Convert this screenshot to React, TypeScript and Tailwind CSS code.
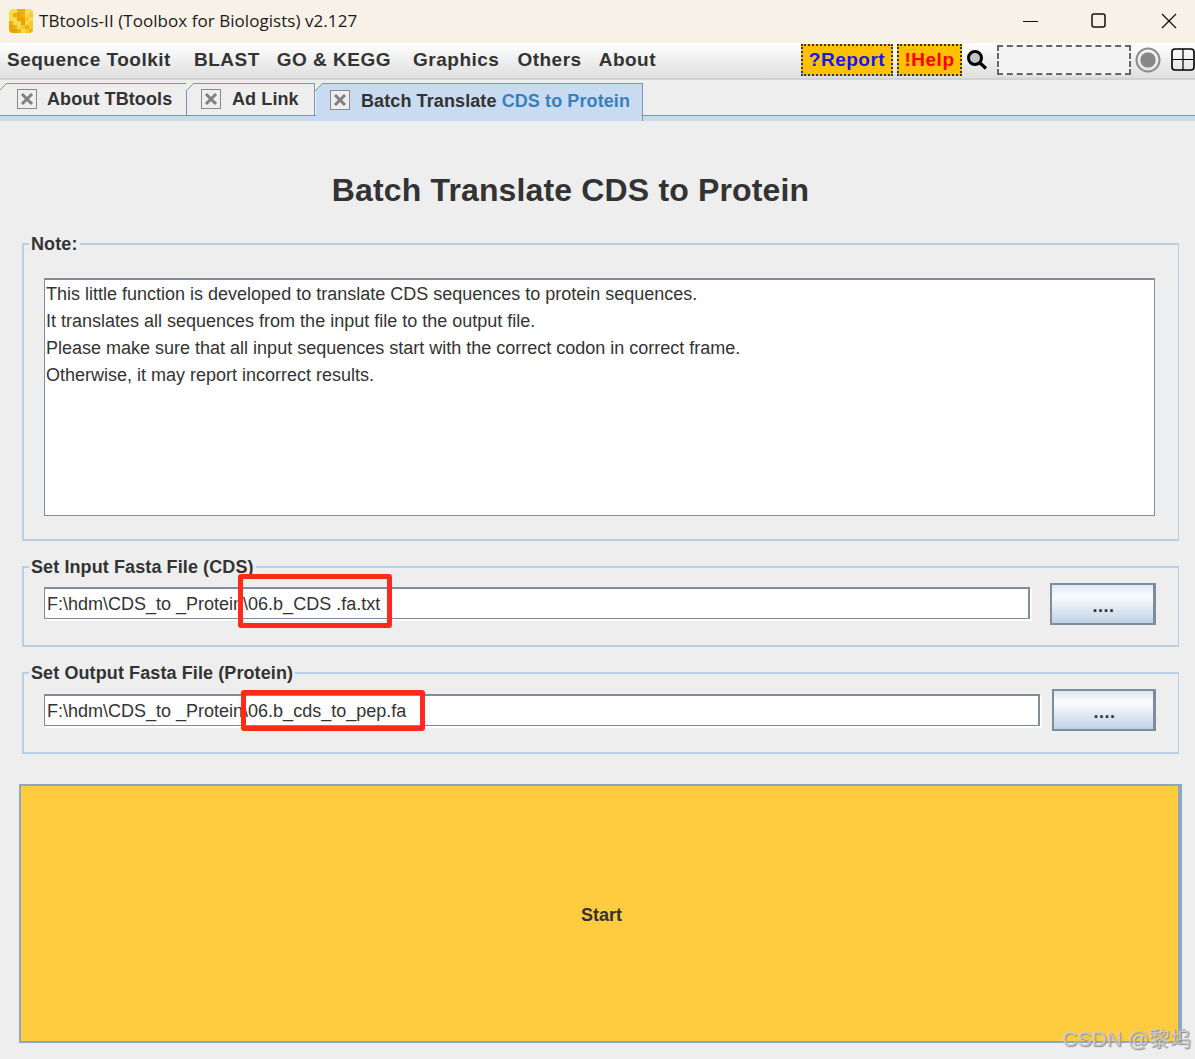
const LOGO = [
  '#f9d94f', '#f9d94f', '#eeb00e', '#eeb00e', '#f9d94f', '#f9d94f',
  '#f9d94f', '#eeb00e', '#e8a400', '#eeb00e', '#f9d94f', '#f5c92e',
  '#f9d94f', '#f9d94f', '#e8a400', '#e8a400', '#f5c92e', '#f9d94f',
  '#eeb00e', '#f9d94f', '#f9d94f', '#e8a400', '#f9d94f', '#f5c92e',
  '#e8a400', '#eeb00e', '#f9d94f', '#f5c92e', '#eeb00e', '#f5c92e',
  '#e8a400', '#e8a400', '#eeb00e', '#f9d94f', '#f5c92e', '#eeb00e',
];

const Logo = () => (
  <svg width="24" height="24" viewBox="0 0 24 24" className="ml-[9px] mr-[6px] shrink-0">
    <clipPath id="logo-clip">
      <rect width="24" height="24" rx="4" />
    </clipPath>
    <g clipPath="url(#logo-clip)">
      {LOGO.map((c, i) => (
        <rect key={i} x={(i % 6) * 4} y={Math.floor(i / 6) * 4} width="4" height="4" fill={c} />
      ))}
    </g>
  </svg>
);

const CloseBox = () => (
  <svg width="20" height="20" viewBox="0 0 20 20" className="shrink-0">
    <rect x="0.5" y="0.5" width="19" height="19" fill="#eeeeee" stroke="#8a8a8a" />
    <path d="M5 5 L15 15 M15 5 L5 15" stroke="#808080" strokeWidth="3" />
  </svg>
);

const TabCorner = ({ color }: { color: string }) => (
  <svg width="8" height="8" viewBox="0 0 8 8" className="absolute left-[-1px] top-[-1px]">
    <path d="M0 0 H8 L0 8 Z" fill="#eeeeee" />
    <path d="M0 8 L8 0" stroke={color} strokeWidth="1" />
  </svg>
);

const menus = [
  { label: 'BLAST', margin: 'ml-[23px]' },
  { label: 'GO & KEGG', margin: 'ml-[17px]' },
  { label: 'Graphics', margin: 'ml-[22px]' },
  { label: 'Others', margin: 'ml-[18px]' },
  { label: 'About', margin: 'ml-[17px]' },
];

const PathField = ({ width, text }: { width: string; text: string }) => (
  <div className={`${width} h-[32px] pt-[2px] bg-white border-t-2 border-l border-b border-r-2 border-[#7f8c9c] flex items-center pl-[2px] text-[18px] text-[#333333] whitespace-nowrap shadow-[2px_2px_0_#ffffff]`}>
    {text}
  </div>
);

const DotsButton = ({ width, height }: { width: string; height: string }) => (
  <button className={`${width} ${height} border-2 border-r-[3px] border-[#7f8c9c] bg-gradient-to-b from-[#dfe8f2] via-[#fbfcfe] via-30% to-[#bfd2e6] flex items-end justify-center pl-[2px] pb-[9px] text-[18px] font-bold leading-[16px] tracking-[0.5px] text-[#333333]`}>
    ....
  </button>
);

const App = () => {
  return (
    <div className="relative w-[1195px] h-[1059px] overflow-hidden bg-[#eeeeee] font-['Liberation_Sans',Arial,sans-serif]">
      {/* Window title */}
      <div className="h-[43px] pb-[2px] bg-[#f8f1e8] flex items-center">
        <Logo />
        <span className="font-['Open_Sans',sans-serif] text-[17px] tracking-[0.05px] text-[#1a1a1a]">TBtools-II (Toolbox for Biologists) v2.127</span>
        <div className="ml-auto flex items-center">
          <svg width="16" height="16" viewBox="0 0 16 16" className="mr-[52px]">
            <path d="M0 8.5 H15" stroke="#111111" strokeWidth="1" />
          </svg>
          <svg width="16" height="16" viewBox="0 0 16 16" className="mr-[54px]">
            <rect x="1" y="1" width="13" height="13" rx="2" fill="none" stroke="#111111" strokeWidth="1.5" />
          </svg>
          <svg width="16" height="16" viewBox="0 0 16 16" className="mr-[18px]">
            <path d="M1 1 L15 15 M15 1 L1 15" stroke="#111111" strokeWidth="1.3" />
          </svg>
        </div>
      </div>

      {/* Menu bar */}
      <div className="h-[35px] pb-[2px] bg-gradient-to-b from-white to-[#dfdfdf] flex items-center text-[19px] font-bold text-[#333333] tracking-[0.5px]">
        <span className="ml-[7px] mt-[2px]">Sequence Toolkit</span>
        {menus.map(m => (
          <span key={m.label} className={`${m.margin} mt-[2px]`}>{m.label}</span>
        ))}
        <div className="ml-auto flex items-center h-[33px]">
          <button className="w-[92px] h-[32px] pt-[2px] bg-[#ffc000] border-2 border-dotted border-[#333366] font-bold text-[#1414ff] flex items-center justify-center">?Report</button>
          <button className="ml-[4px] w-[65px] h-[32px] pt-[2px] bg-[#ffc000] border-2 border-dotted border-[#333333] font-bold text-[#ff0000] flex items-center justify-center">!Help</button>
          <svg width="22" height="22" viewBox="0 0 22 22" className="ml-[4px]">
            <circle cx="9" cy="9" r="6.5" fill="#c4c4c4" stroke="#000000" strokeWidth="3" />
            <path d="M13.5 13.5 L20 19.5" stroke="#000000" strokeWidth="3.2" />
          </svg>
          <div className="ml-[9px] w-[134px] h-[30px] bg-[#f4f4f4] border-2 border-dashed border-[#666666]"></div>
          <svg width="26" height="26" viewBox="0 0 26 26" className="ml-[4px]">
            <circle cx="13" cy="13" r="11.5" fill="none" stroke="#8c8c8c" strokeWidth="2" />
            <circle cx="13" cy="13" r="8" fill="#868686" stroke="#dddddd" strokeWidth="1" />
          </svg>
          <svg width="24" height="24" viewBox="0 0 24 24" className="ml-[10px]">
            <rect x="1" y="1" width="22" height="21" rx="3" fill="none" stroke="#000000" strokeWidth="1.6" />
            <path d="M12 1 V22 M1 11.5 H23" stroke="#000000" strokeWidth="1.2" />
          </svg>
        </div>
      </div>
      <div className="h-[2px] bg-[#d2d2d2]"></div>

      {/* Tabs */}
      <div className="relative h-[41px] text-[18px] font-bold text-[#333333] tracking-[0.1px] whitespace-nowrap">
        <div className="absolute inset-x-0 top-[35px] h-[1px] bg-[#7a93c0]"></div>
        <div className="absolute inset-x-0 top-[36px] h-[5px] bg-[#c8dbf1]"></div>
        <div className="flex items-start pt-[3px] h-full">
          <div className="relative z-10 w-[187px] h-[33px] pb-[2px] border-t border-r border-[#7a93c0] flex items-center">
            <TabCorner color="#7a93c0" />
            <div className="ml-[17px] mr-[10px]"><CloseBox /></div>
            <span>About TBtools</span>
          </div>
          <div className="relative z-10 w-[128px] h-[33px] pb-[2px] border-t border-r border-[#7a93c0] flex items-center">
            <TabCorner color="#7a93c0" />
            <div className="ml-[14px] mr-[11px]"><CloseBox /></div>
            <span>Ad Link</span>
          </div>
          <div className="relative z-10 ml-[1px] w-[327px] h-[38px] bg-[#c8dbf1] border-t border-r border-[#7a93c0] flex items-center pb-[2px]">
            <TabCorner color="#7a93c0" />
            <div className="ml-[14px] mr-[11px] mt-[-4px]"><CloseBox /></div>
            <span>Batch Translate <span className="text-[#3a7fbd]">CDS to Protein</span></span>
          </div>
        </div>
      </div>

      {/* Page body */}
      <div className="relative">
        <h1 className="pt-[49px] h-[113px] text-center text-[32px] leading-[40px] font-bold text-[#333333] tracking-[0.15px] ml-[-54px]">
          Batch Translate CDS to Protein
        </h1>

        <div className="pl-[22px] pr-[16px] text-[18px] font-bold text-[#333333] tracking-[0.1px]">
          <fieldset className="h-[307px] border-2 border-[#b8cfe6] border-r">
            <legend className="ml-[5px] px-[2px] leading-[20px]">Note:</legend>
            <div className="ml-[20px] mr-[23px] mt-[24px] pt-[1px] h-[238px] bg-white border-t-2 border-l border-b border-r border-[#7f8c9c] px-[1px] text-[18px] leading-[27px] font-normal tracking-normal text-[#333333]">
              <p>This little function is developed to translate CDS sequences to protein sequences.</p>
              <p>It translates all sequences from the input file to the output file.</p>
              <p>Please make sure that all input sequences start with the correct codon in correct frame.</p>
              <p>Otherwise, it may report incorrect results.</p>
            </div>
          </fieldset>

          <fieldset className="mt-[16px] h-[90px] border-2 border-[#b8cfe6] border-r">
            <legend className="ml-[5px] px-[2px] leading-[20px]">Set Input Fasta File (CDS)</legend>
            <div className="flex items-start pl-[20px] font-normal tracking-normal">
              <div className="mt-[10px]">
                <PathField width="w-[986px]" text="F:\hdm\CDS_to _Protein\06.b_CDS .fa.txt" />
              </div>
              <div className="ml-[20px] mt-[6px]">
                <DotsButton width="w-[106px]" height="h-[42px]" />
              </div>
            </div>
          </fieldset>

          <fieldset className="mt-[16px] h-[91px] border-2 border-[#b8cfe6] border-r">
            <legend className="ml-[5px] px-[2px] leading-[20px]">Set Output Fasta File (Protein)</legend>
            <div className="flex items-start pl-[20px] font-normal tracking-normal">
              <div className="mt-[11px]">
                <PathField width="w-[996px]" text="F:\hdm\CDS_to _Protein\06.b_cds_to_pep.fa" />
              </div>
              <div className="ml-[12px] mt-[6px]">
                <DotsButton width="w-[104px]" height="h-[42px]" />
              </div>
            </div>
          </fieldset>
        </div>

        <div className="pl-[19px] pr-[13px] mt-[30px]">
          <button className="w-full h-[259px] pt-[4px] pl-[4px] bg-[#ffcc40] border-2 border-r-4 border-[#8fa6c0] text-[18px] font-bold text-[#333333]">
            Start
          </button>
        </div>
      </div>

      {/* Red annotation boxes */}
      <div className="absolute left-[238px] top-[574px] w-[154px] h-[54px] border-[5px] border-[#ff2a1a] rounded-[3px]"></div>
      <div className="absolute left-[241px] top-[690px] w-[184px] h-[41px] border-[5px] border-[#ff2a1a] rounded-[3px]"></div>

      {/* Watermark */}
      <div className="absolute right-[4px] top-[1025px] text-[21px] leading-[28px] text-[#c8c8c8] [text-shadow:1px_1px_1px_#8a8a8a] font-['Liberation_Sans','Noto_Sans_CJK_SC',sans-serif]">
        CSDN @黎坞
      </div>
    </div>
  );
};

export default App;
